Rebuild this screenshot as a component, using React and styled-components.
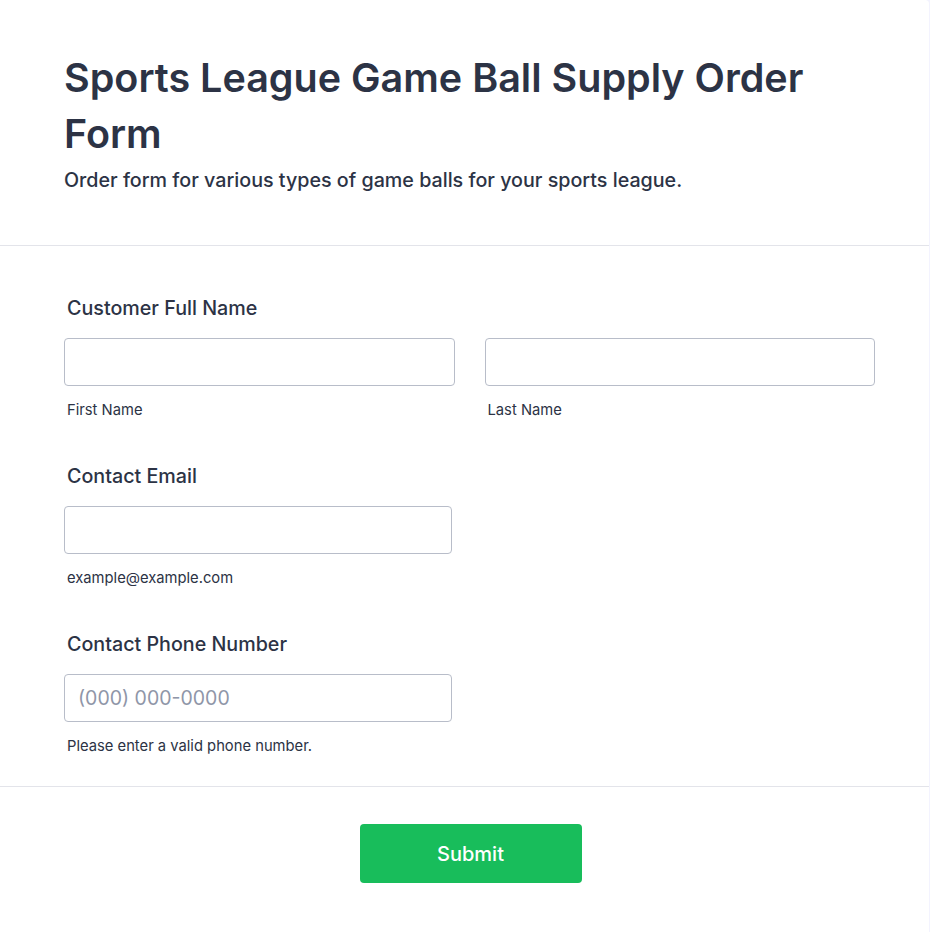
import React from 'react';
import styled, { createGlobalStyle } from 'styled-components';

const GlobalStyle = createGlobalStyle`
  html, body {
    margin: 0;
    padding: 0;
    background: #f3f3fe;
  }
  * {
    box-sizing: border-box;
  }
`;

const fields = [
  { label: 'Contact Email', sub: 'example@example.com', type: 'email' },
  { label: 'Contact Phone Number', sub: 'Please enter a valid phone number.', type: 'tel', placeholder: '(000) 000-0000' },
];

const App = () => {
  return (
    <>
      <GlobalStyle />
      <Card>
        <Header>
          <Title>Sports League Game Ball Supply Order Form</Title>
          <Subtitle>Order form for various types of game balls for your sports league.</Subtitle>
        </Header>
        <FormBody>
          <Field>
            <Label>Customer Full Name</Label>
            <NameRow>
              <Column>
                <Input type="text" />
                <SubLabel>First Name</SubLabel>
              </Column>
              <Column>
                <Input type="text" />
                <SubLabel>Last Name</SubLabel>
              </Column>
            </NameRow>
          </Field>
          {fields.map((f) => (
            <Field key={f.label}>
              <Label>{f.label}</Label>
              <Column $narrow>
                <Input type={f.type} placeholder={f.placeholder} />
                <SubLabel>{f.sub}</SubLabel>
              </Column>
            </Field>
          ))}
        </FormBody>
        <Footer>
          <SubmitButton type="submit">Submit</SubmitButton>
        </Footer>
      </Card>
    </>
  );
};

export default App;

const Card = styled.div`
  width: 929px;
  min-height: 932px;
  background: #fff;
  border-top-right-radius: 4px;
  font-family: Inter, 'Noto Sans', sans-serif;
  color: #2c3345;
`;

const Header = styled.div`
  padding: 50px 64px 51px;
  border-bottom: 1px solid #e3e4ea;
`;

const Title = styled.h1`
  margin: 0;
  font-size: 39.5px;
  line-height: 56px;
  font-weight: 600;
  max-width: 780px;
`;

const Subtitle = styled.p`
  margin: 4px 0 0;
  font-size: 19.7px;
  line-height: 28px;
  font-weight: 500;
`;

const FormBody = styled.div`
  display: flex;
  flex-direction: column;
  gap: 41px;
  padding: 48px 54px 29px 64px;
  border-bottom: 1px solid #e3e4ea;
`;

const Field = styled.div`
  display: flex;
  flex-direction: column;
  gap: 16px;
`;

const Label = styled.label`
  padding-left: 3px;
  font-size: 19.7px;
  line-height: 28px;
  font-weight: 500;
`;

const NameRow = styled.div`
  display: grid;
  grid-template-columns: 1fr 1fr;
  gap: 30px;
`;

const Column = styled.div`
  display: flex;
  flex-direction: column;
  gap: 13px;
  width: ${({ $narrow }) => ($narrow ? '388px' : 'auto')};
`;

const Input = styled.input`
  width: 100%;
  height: 48px;
  padding: 0 13px;
  border: 1px solid #b8bdc9;
  border-radius: 4px;
  font-family: Inter, 'Noto Sans', sans-serif;
  font-size: 19.5px;
  color: #2c3345;
  outline: none;

  &::placeholder {
    color: #8f96a8;
  }
`;

const SubLabel = styled.span`
  padding-left: 3px;
  font-size: 14.75px;
  line-height: 22px;
  color: #2c3345;
`;

const Footer = styled.div`
  display: flex;
  justify-content: center;
  padding: 37px 0 40px 12px;
`;

const SubmitButton = styled.button`
  width: 222px;
  height: 59px;
  border: none;
  border-radius: 4px;
  background: #18bd5b;
  color: #fff;
  font-family: Inter, 'Noto Sans', sans-serif;
  font-size: 20px;
  font-weight: 500;
  cursor: pointer;
`;
